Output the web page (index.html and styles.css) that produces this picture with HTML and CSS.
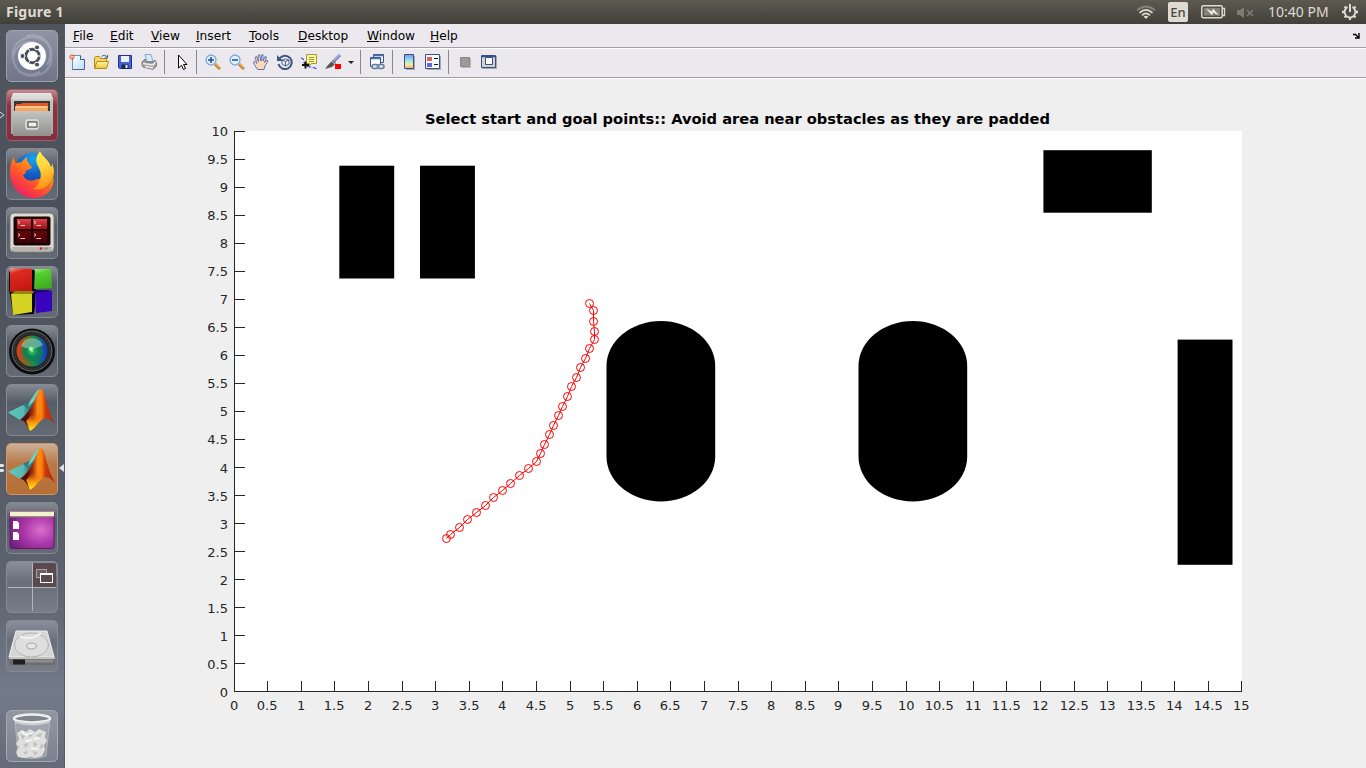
FILE: index.html
```html
<!DOCTYPE html>
<html lang="en">
<head>
<meta charset="utf-8">
<title>Figure 1</title>
<link rel="stylesheet" href="styles.css">
</head>
<body>
<svg class="defs" width="0" height="0" aria-hidden="true">
  <defs>
    <linearGradient id="metal" x2="0" y2="1"><stop stop-color="#e9e9e7"/><stop offset=".2" stop-color="#c4c4c2"/><stop offset="1" stop-color="#a5a5a4"/></linearGradient>
    <linearGradient id="drawer" x2="0" y2="1"><stop stop-color="#c4c4c3"/><stop offset="1" stop-color="#8f8f8e"/></linearGradient>
    <linearGradient id="fox" x1=".9" y1="0" x2=".2" y2="1"><stop stop-color="#ffc83a"/><stop offset=".35" stop-color="#ff8a17"/><stop offset=".65" stop-color="#ff4a33"/><stop offset="1" stop-color="#e71872"/></linearGradient>
    <linearGradient id="flame" x2=".2" y2="1"><stop stop-color="#fff44a"/><stop offset=".5" stop-color="#ffd43c"/><stop offset="1" stop-color="#ff9414"/></linearGradient>
    <radialGradient id="globe" cx=".5" cy=".15" r=".9"><stop stop-color="#18a5f4"/><stop offset=".5" stop-color="#1459bf"/><stop offset="1" stop-color="#1c2a80"/></radialGradient>
    <linearGradient id="redpane" x2="0" y2="1"><stop stop-color="#e2444a"/><stop offset="1" stop-color="#a30d12"/></linearGradient>
    <linearGradient id="darkpane" x2="0" y2="1"><stop stop-color="#6e0408"/><stop offset="1" stop-color="#3c0204"/></linearGradient>
    <linearGradient id="cubeR" x2=".3" y2="1"><stop stop-color="#f0a49c"/><stop offset=".25" stop-color="#dc2a20"/><stop offset="1" stop-color="#c61812"/></linearGradient>
    <linearGradient id="cubeG" x2=".3" y2="1"><stop stop-color="#a8f08c"/><stop offset=".3" stop-color="#54cf2e"/><stop offset="1" stop-color="#3fae20"/></linearGradient>
    <radialGradient id="lens"><stop stop-color="#9cf59a"/><stop offset=".22" stop-color="#25a860"/><stop offset=".6" stop-color="#0e7f52"/><stop offset="1" stop-color="#127a60" stop-opacity=".4"/></radialGradient>
    <linearGradient id="lensring"><stop stop-color="#e03a16"/><stop offset=".3" stop-color="#7d6a20"/><stop offset=".55" stop-color="#16904a"/><stop offset="1" stop-color="#1238c8"/></linearGradient>
    <linearGradient id="mlMain"><stop stop-color="#4a1512"/><stop offset=".2" stop-color="#4a0d0c"/><stop offset=".36" stop-color="#a8300c"/><stop offset=".5" stop-color="#ff8a10"/><stop offset=".6" stop-color="#ff8410"/><stop offset=".72" stop-color="#c93a0c"/><stop offset="1" stop-color="#a8230c"/></linearGradient>
    <linearGradient id="mlFoot" x2="0" y2="1"><stop stop-color="#e8600c" stop-opacity="0"/><stop offset=".5" stop-color="#f8920e"/><stop offset="1" stop-color="#fff21e"/></linearGradient>
    <linearGradient id="teal" x2="1"><stop stop-color="#5cc9c0"/><stop offset=".7" stop-color="#58b9b2"/><stop offset="1" stop-color="#2b6f76"/></linearGradient>
    <radialGradient id="desk" cx=".7" cy=".5" r=".75"><stop stop-color="#d870cc"/><stop offset=".5" stop-color="#ac38aa"/><stop offset="1" stop-color="#722080"/></radialGradient>
    <linearGradient id="page" x2="1" y2="1"><stop stop-color="#fff"/><stop offset="1" stop-color="#b8dcfa"/></linearGradient>
    <linearGradient id="folder" x2="0" y2="1"><stop stop-color="#fff7a0"/><stop offset="1" stop-color="#efc13a"/></linearGradient>
    <linearGradient id="bar" x2="0" y2="1"><stop stop-color="#8a8cf0"/><stop offset=".4" stop-color="#8be8ec"/><stop offset=".7" stop-color="#f5ef9a"/><stop offset="1" stop-color="#f6a184"/></linearGradient>
    <symbol id="matlab" viewBox="0 0 52 52">
      <path d="M2 28.500 17 21 24 25 14 36Z" fill="url(#teal)"/>
      <path d="M17 21c1-2 4-1 6-3 4-4 7-12 11-13L30 17 23 26Z" fill="#2d7c80"/>
      <path d="M24 17C28 12 30 6 34 5L28 17 22 23Z" fill="#72d2c8"/>
      <path d="M14 36C19 33 23 27 27 20 31 12 32 5 35 5c3 0 4 9 7 18 2 7 4 12 7.500 17-4-4-8-6.500-11-5.500C32 36 29 46 24 47c-2-3-4-11-10-11Z" fill="url(#mlMain)"/>
      <path d="M20 37l7-8 7 2 2 5c-4 2-7 9-12 11-2-3-2-7-4-10Z" fill="url(#mlFoot)"/>
    </symbol>
  </defs>
</svg>

<header class="topbar">
  <div class="topbar-title">Figure 1</div>
  <div class="indicators">
    <svg class="ind-wifi" width="20" height="15" viewBox="0 0 20 15" fill="none" stroke-width="1.700"><path d="M1 5.300Q10-2.300 19 5.300" stroke="#85827a"/><path d="M3.500 7.800Q10 2 16.500 7.800M6 10.300Q10 6.500 14 10.300" stroke="#dfdbd2"/><path d="M7.500 11.600Q10 9.700 12.500 11.600L10 14Z" fill="#dfdbd2"/></svg>
    <span class="ind-lang">En</span>
    <svg class="ind-battery" width="25" height="14" viewBox="0 0 25 14"><rect x=".8" y=".8" width="20.400" height="12" rx="1.500" fill="none" stroke="#dfdbd2" stroke-width="1.500"/><rect x="3" y="3" width="16" height="7.600" fill="#85827a"/><path d="M22 3.500h1.500v7H22" fill="none" stroke="#dfdbd2" stroke-width="1.300"/><path d="M5 3.500 11 6.500 12 3.500 18 10.500 12 7.500 11 10.500Z" fill="#f0ece4"/></svg>
    <svg class="ind-sound" width="19" height="13" viewBox="0 0 19 13"><path d="M1 4h3L8 1v11L4 9H1Z" fill="#7f7c74"/><path d="M11 4l6 6M17 4l-6 6" stroke="#7f7c74" stroke-width="1.500"/></svg>
    <span class="ind-clock">10:40 PM</span>
    <svg class="ind-gear" width="18" height="18" viewBox="0 0 18 18" fill="none" stroke="#dfdbd2"><circle cx="9" cy="9" r="5.400" stroke-width="1.900"/><path d="M14 9h3M1 9h3M9 14v3M12.500 12.500l2 2M3.500 14.500l2-2M12.500 5.500l2-2M3.500 3.500l2 2" stroke-width="2.300"/><path d="M9 1v8" stroke="#4f4d45" stroke-width="4.500"/><path d="M9 1v8" stroke-width="2"/></svg>
  </div>
</header>

<div class="workspace">
  <nav class="launcher">
    <div class="tile tile-dash"><svg viewBox="0 0 52 52"><path d="M7 29C4 12 22 2 37 10c10 6 8 18 4 25M45 27c2 16-18 25-33 14M11 38C1 27 12 9 28 12M20 6c16-4 30 9 24 26M34 42C18 50 4 38 8 22" fill="none" stroke="#fff" stroke-opacity=".2" stroke-width="2"/><circle cx="26" cy="26" r="14" fill="#fdfdfd"/><circle cx="26.500" cy="26" r="6.700" fill="none" stroke="#4c505b" stroke-width="3"/><path d="M26.500 26 35 26M26.500 26 22 18M26.500 26 22 34" stroke="#fff"/><circle cx="26.500" cy="26" r="5" fill="#fff"/><g fill="#4c505b" stroke="#fff"><circle cx="16.500" cy="26" r="2.500"/><circle cx="31" cy="17.400" r="2.500"/><circle cx="31" cy="34.600" r="2.500"/></g></svg></div>
    <div class="tile tile-files"><svg viewBox="0 0 52 52"><path d="M7 4h38l2 6v35H5V10Z" fill="url(#metal)"/><path d="M5 9h42" stroke="#e2e2e0"/><path d="M8 12h36v10H8Z" fill="#3b3734"/><path d="M10 15h5l1-1h26v9H10Z" fill="#dc5b22"/><path d="M9 17h33v6H9Z" fill="#f4a65f"/><path d="M10 18h31" stroke="#ffe3be"/><path d="M6 22h40l-1 25H7Z" fill="url(#drawer)"/><rect x="20" y="31" width="12" height="9" rx="2" fill="#bbb" stroke="#e0e0e0" stroke-width="1.500"/><rect x="22" y="33" width="9" height="5" fill="#efefef" stroke="#464646"/></svg></div>
    <div class="tile"><svg viewBox="0 0 52 52"><circle cx="27" cy="24" r="19" fill="url(#globe)"/><path d="M8 9c0 2 1 5 2 6l6-1c1-2 3-4 5-5 0 3 0 5 2 6 0 2 2 3 3 4 0 2-4 2-6 4 0 2-1 3-3 4 2 6 9 7 14 4 8 1 10-9 8-17 9 10 8 26-5 29 6-1 12-7 13-15 3 14-9 23-22 22C13 48 4 38 4 25 4 18 5 13 8 9Z" fill="url(#fox)"/><path d="M34 3c-4 5-5 10-2 15 3 6 4 10 1 16-1 3-3 6-6 7 12 2 20-5 21-17 0-3-1-7-2-9 0 2 0 3-1 4-2-8-9-10-11-16Z" fill="url(#flame)"/></svg></div>
    <div class="tile"><svg viewBox="0 0 52 52"><rect x="4" y="6" width="44" height="39" rx="4" fill="#dcdcd5" stroke="#777872"/><path d="M6 42h40" stroke="#b6b6af" stroke-width="4"/><rect x="7.500" y="9.500" width="37" height="29" rx="2" fill="#1c0506"/><path d="M11 12h14v10H11ZM27 12h14v10H27Z" fill="url(#redpane)"/><path d="M11 24h14v12H11ZM27 24h14v12H27Z" fill="url(#darkpane)"/><g fill="none" stroke="#f3dede" stroke-width=".9"><path d="M12 14l2 1.500-2 1.500M14.500 18.500h4.500M28 14l2 1.500-2 1.500M30.500 18.500h4.500M12 26.500l2 1.500-2 1.500M14.500 31.500h4.500M28 26.500l2 1.500-2 1.500M30.500 31.500h4.500"/></g><circle cx="35" cy="41.500" r="1.300" fill="#e11818"/><path d="M38 41.500h4" stroke="#8e8e88" stroke-width="2"/></svg></div>
    <div class="tile"><svg viewBox="0 0 52 52"><path d="M3 25V6l3-3 22 1v22H6l22 2v20L7 49 4 28ZM27 24V6l3-3v21ZM26 27l3-2v22Z" fill="#050505"/><path d="M4 2 26 3 26 25 4 26Z" fill="url(#cubeR)"/><path d="M29 3 45 3 46 22 28 23Z" fill="url(#cubeG)"/><path d="M5 28 26 26 26 46 7 49Z" fill="#d4d324"/><path d="M5 28l4-3 20 0-3 3Z" fill="#8c8a15"/><path d="M29 26 46 25 46 45 30 47Z" fill="#3904bd"/><path d="M26 24h16l4 1-17 2Z" fill="#200470"/></svg></div>
    <div class="tile"><svg viewBox="0 0 52 52"><circle cx="26" cy="26.500" r="23" fill="#0d0d0f"/><circle cx="26" cy="26" r="20" fill="#262729" stroke="#6a6c6e"/><circle cx="26" cy="26" r="18" fill="none" stroke="#62646680" stroke-dasharray="2 1.500"/><circle cx="26" cy="26" r="15.500" fill="url(#lensring)"/><circle cx="26" cy="26" r="11" fill="url(#lens)"/><path d="M15 21a12 12 0 0 1 22-1Q29 24 26 24 20 24 15 21Z" fill="#d8f3e8" opacity=".4"/><circle cx="25" cy="24" r="2" fill="#b1ff9d"/></svg></div>
    <div class="tile"><svg viewBox="0 0 52 52"><use href="#matlab"/></svg></div>
    <div class="tile tile-active"><svg viewBox="0 0 52 52"><use href="#matlab"/></svg></div>
    <div class="tile"><svg viewBox="0 0 52 52"><rect x="4" y="9.500" width="44" height="37" rx="2" fill="url(#desk)" stroke="#701367"/><path d="M4 9.500h44v5H4Z" fill="#f4f1cf"/><path d="M4 15h44" stroke="#7f7d5d"/><path d="M7 19h4l2 2v6H7ZM7 30h4l2 2v6H7Z" fill="#fff"/></svg></div>
    <div class="tile tile-spaces"><svg viewBox="0 0 52 52"><path d="M27 2h21q2 0 2 2v22H27Z" fill="#5a4a50"/><path d="M26.500 2v48M2 26.500h48" stroke="#b1b5bc"/><rect x="30.500" y="8.500" width="10" height="8" fill="#6b5f64" stroke="#a9a2a6"/><rect x="34.500" y="12.500" width="12" height="9" fill="#5a4a50" stroke="#fff"/><path d="M34 13h13" stroke="#fff" stroke-width="2"/></svg></div>
    <div class="tile tile-spaces"><svg viewBox="0 0 52 52"><path d="M10 11h31l7 26H3Z" fill="#d6d6d6" stroke="#efefef"/><path d="M3 37h46v7q0 1-2 1H5q-2 0-2-1Z" fill="#6d6d6d"/><path d="M3 37h46v2H3Z" fill="#c3c3c3"/><path d="M7 39.500h12v5H7Z" fill="#1f1f1f"/><path d="M19 39.500h28v3H19Z" fill="#8d8d8d"/><ellipse cx="25.500" cy="25" rx="17" ry="12" fill="#dedede" stroke="#b5b5b5"/><path d="M14 16c7 4 15 2 21-3" stroke="#f2f2f2" fill="none" stroke-width="2"/><ellipse cx="25.500" cy="26" rx="5" ry="3" fill="#e6e6e6" stroke="#a1a1a1"/></svg></div>
    <div class="tile tile-trash"><svg viewBox="0 0 52 52"><path d="M9 10 12 46Q26 51 40 46L44 10Z" fill="#fff" fill-opacity=".18" stroke="#e5e7ea" stroke-opacity=".4"/><path d="M11 23l5-3 4 2 4-3 5 3 4-3 7 3-1 5 2 4-3 4 1 5-3 6-7 2-4-1-7 1-6-1-2-5 3-5-3-3 3-5Z" fill="#dfe0dd"/><path d="M14 24l5 2-2 4ZM22 22l5 3-4 3ZM30 25l6-2-2 5ZM17 34l6-1-3 5ZM27 32l5 2-4 3ZM35 33l3 3-4 3ZM17 42l5-1-2 4ZM27 41l5 1-3 4Z" fill="#bfc1bf"/><path d="M15 21l5 4 6-2M28 29l6-1M20 31l6-1M25 38l7 1" stroke="#fafafa" fill="none" stroke-width="1.500"/><ellipse cx="26" cy="8.500" rx="18" ry="4" fill="#80858c" stroke="#eff0f1" stroke-width="2.500"/><path d="M9 12q17 5 34 0" fill="none" stroke="#c9cbce" stroke-width="2"/></svg></div>
    <svg class="marker marker-files" width="5" height="8" viewBox="0 0 5 8"><path d="M0 1 4 4 0 7" fill="none" stroke="#dcdcdc"/></svg>
    <svg class="marker marker-running" width="5" height="9" viewBox="0 0 5 9"><path d="M0 0h3l1.500 1.500L3 3H0ZM0 5h3l1.500 1.500L3 8H0Z" fill="#e2e2e2"/></svg>
    <svg class="marker marker-focus" width="5" height="8" viewBox="0 0 5 8"><path d="M5 0v8L0 4Z" fill="#e2e2e2"/></svg>
  </nav>

  <main class="window">
    <div class="menubar">
      <span class="m-file"><u>F</u>ile</span><span class="m-edit"><u>E</u>dit</span><span class="m-view"><u>V</u>iew</span><span class="m-insert"><u>I</u>nsert</span><span class="m-tools"><u>T</u>ools</span><span class="m-desktop"><u>D</u>esktop</span><span class="m-window"><u>W</u>indow</span><span class="m-help"><u>H</u>elp</span>
      <svg class="dock" width="7" height="6" viewBox="0 0 7 6"><path d="M0 1.500h2.500L5.500 4.500M6 0v5H2" fill="none" stroke="#000" stroke-width="1.400"/></svg>
    </div>
    <div class="toolbar">
      <span class="tool"><svg viewBox="0 0 16 16"><path d="M3.500 1.500h8l4 4v10h-12Z" fill="url(#page)" stroke="#6b8fbc"/><path d="M11.500 1.500v4h4" fill="#fff" stroke="#34588e"/><path d="M15.500 6v9.500h-12" fill="none" stroke="#45648f"/><path d="M3 0v6M0 3h6M1 1l4 4M5 1 1 5" stroke="#e5582b"/><circle cx="3" cy="3" r="1" fill="#ffd6a2"/></svg></span>
      <span class="tool"><svg viewBox="0 0 16 16"><path d="M1.500 14.500v-11l1-1h4l1 2h6v9" fill="#f3d76a" stroke="#b58a1b"/><path d="M1.500 14.500 4 7.500h11.500l-2 7Z" fill="url(#folder)" stroke="#b58a1b"/><path d="M8.500 2.500Q12-.500 14 3.500M14.500 1v3h-3" fill="none" stroke="#416590"/></svg></span>
      <span class="tool"><svg viewBox="0 0 16 16"><path d="M1.500 1.500h13v13h-12l-1-1Z" fill="#4564d4" stroke="#263186"/><path d="M4 2h8v6H4Z" fill="#e8effb"/><path d="M4.500 10.500h7V15h-7Z" fill="#1b2558"/><path d="M8.500 11h2v3h-2Z" fill="#f0f2fb"/></svg></span>
      <span class="tool"><svg viewBox="0 0 16 16"><path d="M4 .500h6l2 7H6Z" fill="#d9eafb" stroke="#8ba6c7"/><path d="M1 8l3-3 1 3h7l2-2 1.500 3v3L12 15.500 2 13 1 11Z" fill="#a2a2a2" stroke="#666" stroke-width=".8"/><path d="M2 9.500l10 1.500 2.500-3M4 12.500l8 1.500" fill="none" stroke="#eee" stroke-width="1.300"/></svg></span>
      <i class="sep"></i>
      <span class="tool tool-pointer"><svg viewBox="0 0 16 16"><path d="M4.500 1v13l3-2.700 2 4.200 2-1-2-4H13Z" fill="#fff" stroke="#000"/></svg></span>
      <i class="sep"></i>
      <span class="tool"><svg viewBox="0 0 16 16"><path d="M10 10l5 5" stroke="#bd762a" stroke-width="3"/><path d="M10 9l5 5" stroke="#f4b44b" stroke-width="1.500"/><circle cx="6" cy="6" r="5" fill="#dff1ff" stroke="#84a9d9" stroke-width="1.300"/><path d="M3 6h6M6 3v6" stroke="#1b4ba0" stroke-width="1.500"/></svg></span>
      <span class="tool"><svg viewBox="0 0 16 16"><path d="M10 10l5 5" stroke="#bd762a" stroke-width="3"/><path d="M10 9l5 5" stroke="#f4b44b" stroke-width="1.500"/><circle cx="6" cy="6" r="5" fill="#dff1ff" stroke="#84a9d9" stroke-width="1.300"/><path d="M3 6h6" stroke="#1b4ba0" stroke-width="1.500"/></svg></span>
      <span class="tool"><svg viewBox="0 0 16 16"><path d="M4.500 15.500 1 10 .500 8l1.500-.500 2 2-2-6 1.500-1 2 5-.500-6L6.500.500 8 7 8.500 1 10 .500V7l2-4.500 1.500.500-2 5.500 2.500-2.500 1 1-3 5-1 3.500Z" fill="#fbd9b6" stroke="#3f5cb4" stroke-width=".8"/></svg></span>
      <span class="tool"><svg viewBox="0 0 16 16"><path d="M2.500 4.500A6.700 6.700 0 1 1 1.500 10" fill="none" stroke="#405680" stroke-width="2"/><path d="M0 1v6h6Z" fill="#405680"/><path d="M5 6l3.500-1L12 6v4l-3.500 2L5 10ZM5 6l3.500 1.500L12 6M8.500 7.500V12" fill="#e9effa" stroke="#405680" stroke-width=".9"/></svg></span>
      <span class="tool"><svg viewBox="0 0 16 16"><path d="M0 4q3 0 3 4t6 5 7 2" fill="none" stroke="#1622de" stroke-dasharray="4 1.500"/><path d="M5.500.500h10v9h-5l-2 2.500v-2.500h-3Z" fill="#f9f5a5" stroke="#a29b32"/><path d="M8 3.500h5M8 5.500h5M8 7.500h5" stroke="#a29b32"/><path d="M4.500 7.500v7M1 11h7" stroke="#111" stroke-width="2"/></svg></span>
      <span class="tool"><svg viewBox="0 0 16 16"><path d="M15 1 8 8" stroke="#687bc0" stroke-width="3"/><path d="M15 .500 8 7.500" stroke="#d1dbff"/><path d="M8 6l3 3-4 4-7 2 3-4Z" fill="#555"/><path d="M7 7l3 3" stroke="#aaa" stroke-width="1.500"/><path d="M10 10h6v5h-6Z" fill="#f00"/></svg></span>
      <span class="drop"></span>
      <i class="sep"></i>
      <span class="tool"><svg viewBox="0 0 16 16"><path d="M4.500.500h10v8h-10Z" fill="#eff5fd" stroke="#3c5687"/><path d="M1.500 3.500h10v9h-10Z" fill="#fafcff" stroke="#3c5687"/><path d="M2 4.500h9M5 1.500h9" stroke="#4c70b1" stroke-width="1.500"/><rect x="3" y="10.500" width="6" height="4" rx="2" fill="#dce5ed" stroke="#647c98" stroke-width="1.500"/><rect x="9" y="10.500" width="6" height="4" rx="2" fill="#dce5ed" stroke="#647c98" stroke-width="1.500"/><path d="M7 12.500h4" stroke="#8fa2b6"/></svg></span>
      <i class="sep"></i>
      <span class="tool"><svg viewBox="0 0 16 16"><path d="M5 2h9v14H5Z" fill="#aaa"/><path d="M3.500.500h9v14h-9Z" fill="url(#bar)" stroke="#34518b"/></svg></span>
      <span class="tool"><svg viewBox="0 0 16 16"><path d="M2 2h14v14H2Z" fill="#aaa"/><path d="M.500.500h14v14H.500Z" fill="#f8fbff" stroke="#34518b"/><path d="M2 3h5v4H2Z" fill="#dc6262"/><path d="M2 9h5v4H2Z" fill="#6262dc"/><path d="M9 4.500h4M9 10.500h4" stroke="#111"/></svg></span>
      <i class="sep"></i>
      <span class="tool"><svg viewBox="0 0 16 16"><path d="M4 4h10v10H4Z" fill="#bbb"/><path d="M3.500 3.500h9v9h-9Z" fill="#9b9b9b" stroke="#888"/></svg></span>
      <span class="tool"><svg viewBox="0 0 16 16"><path d="M1 2h15v13H1Z" fill="#aaa"/><path d="M.500 1.500h14v12H.500Z" fill="#d7d3c3" stroke="#34518b"/><path d="M1 2.500h13" stroke="#34518b" stroke-width="1.500"/><path d="M4.500 3.500h7v7h-7Z" fill="#fff" stroke="#34518b"/></svg></span>
    </div>
    <div class="figure">
      <svg class="plot" width="1301" height="690" viewBox="65 78 1301 690">
        <rect x="234" y="131" width="1008" height="561" fill="#fff"/>
        <text class="plot-title" x="425" y="124" textLength="625">Select start and goal points:: Avoid area near obstacles as they are padded</text>
        <g class="obstacles">
          <rect x="339.300" y="165.700" width="54.900" height="112.800"/>
          <rect x="420" y="165.700" width="54.900" height="112.800"/>
          <rect x="1043.400" y="150.200" width="108.400" height="62.500"/>
          <rect x="1177.600" y="339.600" width="54.900" height="225.200"/>
          <rect x="606.500" y="321" width="108.700" height="180.500" rx="54.350" ry="45"/>
          <rect x="858.500" y="321" width="108.700" height="180.500" rx="54.350" ry="45"/>
        </g>
        <g id="axes"></g>
        <g id="path"></g>
      </svg>
    </div>
  </main>
</div>
<script src="plot.js"></script>
</body>
</html>
```
FILE: styles.css
```css
* { box-sizing: border-box; }
body { margin: 0; width: 1366px; height: 768px; overflow: hidden; display: flex; flex-direction: column; background: #efefef; font-family: "DejaVu Sans", sans-serif; }
.defs { position: absolute; }
svg { display: block; }

.topbar { height: 24px; flex: none; display: flex; justify-content: space-between; align-items: center; padding: 0 7px 0 6px; background: linear-gradient(#5d5b50, #403f39); color: #dfdbd2; font-family: "Noto Sans", "Open Sans", sans-serif; line-height: 24px; }
.topbar-title { font-weight: 700; font-size: 14px; letter-spacing: 0.250px; }
.indicators { display: flex; align-items: center; }
.ind-wifi { margin-top: 1px; }
.ind-lang { width: 20px; height: 20px; margin-left: 12px; border-radius: 2px; background: #dfdbd2; color: #4a4841; font-size: 13px; font-weight: 500; line-height: 20px; text-align: center; }
.ind-battery { margin-left: 13px; }
.ind-sound { margin-left: 10px; }
.ind-clock { width: 62px; margin-left: 13px; font-size: 14px; white-space: nowrap; }
.ind-gear { margin-left: 11px; }

.workspace { flex: 1; display: flex; min-height: 0; }
.launcher { position: relative; width: 65px; flex: none; display: flex; flex-direction: column; align-items: flex-start; gap: 7px; padding: 6px 0 0 6px; background: linear-gradient(#50565f 0, #4b515c 25%, #525862 50%, #5c636f 75%, #747b88 90%, #646a76 100%); border-right: 1px solid #555b65; }
.tile { width: 52px; height: 52px; flex: none; border: 1px solid #858b95; border-radius: 5px; background: linear-gradient(#858a93 0, #565c67 35%, #656b75 100%); }
.tile svg { width: 52px; height: 52px; margin: -1px; }
.tile-dash { background: linear-gradient(#8e94a3, #6f768a); border-color: #9ca1ad; }
.tile-files { background: linear-gradient(#c58a90, #8a3643 30%, #80303c); border-color: #a35b65; }
.tile-active { background: linear-gradient(#cbb09a, #b97845 40%, #b66f36); border-color: #cf9566; }
.tile-spaces { background: linear-gradient(#8a909b, #676e79 40%, #777e89); }
.tile-trash { margin-top: 31px; background: linear-gradient(#9197a2, #7b828f); border-color: #a3a8b1; }
.marker { position: absolute; left: 0; }
.marker-files { top: 87px; }
.marker-running { top: 440px; }
.marker-focus { top: 440px; left: 59px; }

.window { flex: 1; display: flex; flex-direction: column; min-width: 0; }
.menubar { height: 25px; flex: none; display: flex; padding: 0 7px 0 8px; background: #ebe9ee; border-bottom: 1px solid #fff; box-shadow: inset 0 -1px #a09fa3; font-size: 12.200px; line-height: 24px; color: #000; }
.menubar span { flex: none; white-space: nowrap; }
.menubar u { text-decoration-thickness: 1px; text-underline-offset: 1px; }
.m-file { width: 37px; }
.m-edit { width: 41px; }
.m-view { width: 45px; }
.m-insert { width: 53px; }
.m-tools { width: 49px; }
.m-desktop { width: 69px; }
.m-window { width: 63px; }
.dock { margin: 9px -1px 0 auto; }
.toolbar { height: 30px; flex: none; display: flex; align-items: center; padding-bottom: 3px; background: #ebe9ee; border-bottom: 1px solid #fff; box-shadow: inset 0 -1px #a09fa3; }
.tool { width: 24px; height: 16px; padding-left: 4px; }
.tool svg { width: 16px; height: 16px; }
.tool-pointer { padding-left: 5px; }
.sep { width: 8px; height: 24px; padding-left: 3px; }
.sep::before { content: ""; display: block; width: 1px; height: 24px; background: #88878c; }
.drop { width: 12px; height: 16px; padding: 7px 0 0 3px; }
.drop::before { content: ""; display: block; width: 0; border: 3px solid transparent; border-top-color: #222; border-bottom: 0; }

.figure { flex: 1; min-height: 0; background: #efefef; }
.plot { margin-top: -1px; }
.plot-title { font-weight: 700; font-size: 14.670px; fill: #000; }
.tick { stroke: #262626; stroke-width: 1; shape-rendering: crispEdges; fill: none; }
.label { font-size: 13px; fill: #262626; }
.obstacles { fill: #000; }
.route { fill: none; stroke: #f00; stroke-width: 1; }
```
FILE: plot.js
```js
const NS = "http://www.w3.org/2000/svg";

function add(parent, name, attrs, text) {
  const el = document.createElementNS(NS, name);
  for (const key in attrs) el.setAttribute(key, attrs[key]);
  if (text !== undefined) el.textContent = text;
  parent.appendChild(el);
}

const axes = document.getElementById("axes");
add(axes, "path", { class: "tick", d: "M234.5 131V691.500H1242" });

for (let i = 0; i <= 30; i++) {
  const x = Math.min(Math.floor(234 + i * 33.6) + 0.5, 1241.5);
  add(axes, "path", { class: "tick", d: `M${x} 691.5V681` });
  add(axes, "text", { class: "label", x: x - 0.3, y: 710, "text-anchor": "middle" }, String(i / 2));
}
for (let i = 0; i <= 20; i++) {
  const y = Math.round(691 - i * 28) + 0.5;
  const baseline = i <= 8 ? y + 5.5 : y + 4.5;
  add(axes, "path", { class: "tick", d: `M234.5 ${y}H245` });
  add(axes, "text", { class: "label", x: 228, y: baseline, "text-anchor": "end" }, String(i / 2));
}

const points = [
  [589.5, 303.5], [593.5, 310.5], [593.5, 321.5], [594.5, 331.5], [594.5, 339.5],
  [589.5, 348.5], [585.5, 358.5], [580.5, 367.5], [576.5, 377.5], [571.5, 386.5],
  [567.5, 396.5], [562.5, 406.5], [558.5, 415.5], [553.5, 425.5], [549.5, 434.5],
  [544.5, 444.5], [540.5, 453.5], [536.5, 461.5], [528.5, 468.5], [519.5, 475.5],
  [510.5, 483.5], [502.5, 490.5], [493.5, 497.5], [485.5, 505.5], [476.5, 512.5],
  [467.5, 519.5], [459.5, 527.5], [450.5, 534.5], [446.5, 538.5]
];
const route = document.getElementById("path");
add(route, "polyline", { class: "route", points: points.join(" ") });
for (const [cx, cy] of points) add(route, "circle", { class: "route", cx, cy, r: 4 });
```
